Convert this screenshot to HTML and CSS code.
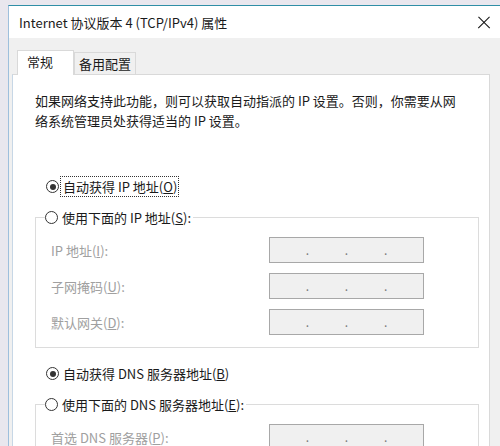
FILE: index.html
```html
<!DOCTYPE html>
<html lang="zh-CN">
<head>
    <meta charset="UTF-8">
    <meta name="viewport" content="width=device-width, initial-scale=1.0">
    <title>Internet 协议版本 4 (TCP/IPv4) 属性</title>
    <link rel="stylesheet" href="styles.css">
</head>
<body>
    <div class="window">
        <!-- Title Bar -->
        <div class="titlebar">
            <span class="title">Internet 协议版本 4 (TCP/IPv4) 属性</span>
            <span class="close" aria-label="关闭"></span>
        </div>

        <div class="client">
            <!-- Tabs -->
            <div class="tabs">
                <div class="tab active">常规</div>
                <div class="tab">备用配置</div>
            </div>

            <div class="panel">
                <p class="desc">如果网络支持此功能，则可以获取自动指派的 IP 设置。否则，你需要从网<br>络系统管理员处获得适当的 IP 设置。</p>

                <!-- IP address -->
                <div class="radio-row first">
                    <span class="radio checked"></span>
                    <span class="focus">自动获得 IP 地址(<u>O</u>)</span>
                </div>
                <fieldset class="group">
                    <legend><span class="radio"></span>使用下面的 IP 地址(<u>S</u>):</legend>
                    <div class="field">
                        <span class="label">IP 地址(<u>I</u>):</span>
                        <div class="ipbox"><span>.</span><span>.</span><span>.</span></div>
                    </div>
                    <div class="field">
                        <span class="label">子网掩码(<u>U</u>):</span>
                        <div class="ipbox"><span>.</span><span>.</span><span>.</span></div>
                    </div>
                    <div class="field">
                        <span class="label">默认网关(<u>D</u>):</span>
                        <div class="ipbox"><span>.</span><span>.</span><span>.</span></div>
                    </div>
                </fieldset>

                <!-- DNS -->
                <div class="radio-row dns">
                    <span class="radio checked"></span>
                    <span class="text">自动获得 DNS 服务器地址(<u>B</u>)</span>
                </div>
                <fieldset class="group last">
                    <legend><span class="radio"></span>使用下面的 DNS 服务器地址(<u>E</u>):</legend>
                    <div class="field">
                        <span class="label">首选 DNS 服务器(<u>P</u>):</span>
                        <div class="ipbox"><span>.</span><span>.</span><span>.</span></div>
                    </div>
                </fieldset>
            </div>
        </div>
    </div>
</body>
</html>
```

FILE: styles.css
```css
/* General Styling */
body {
    margin: 0;
    background-color: #e9e7ee;
    font-family: 'Noto Sans CJK SC', 'Noto Sans', sans-serif;
    font-size: 13px;
    color: #1a1a1a;
    overflow: hidden;
    height: 446px;
    padding-top: 5px;
    box-sizing: border-box;
}

.window {
    margin-left: 8px;
    border-top: 1px solid #2f8ea6;
    border-left: 1px solid #9ebfdc;
    background-color: #f0f0f0;
    height: 440px;
    overflow: hidden;
}

/* Title Bar */
.titlebar {
    height: 32px;
    background-color: #ffffff;
    display: flex;
    align-items: center;
    padding: 0 0 0 10px;
}

.title {
    line-height: 19px;
    flex: 1;
}

/* Close button: two crossed strokes */
.close {
    position: relative;
    width: 14px;
    height: 14px;
    margin: 1px 9px 0 0;
    flex-shrink: 0;
}

.close::before,
.close::after {
    content: "";
    position: absolute;
    left: -1px;
    top: 6px;
    width: 16px;
    height: 1.3px;
    background-color: #111111;
    transform: rotate(45deg);
}

.close::after {
    transform: rotate(-45deg);
}

/* Tabs */
.client {
    padding: 12px 0 0 3px;
}

.tabs {
    display: flex;
    align-items: flex-end;
    padding-left: 5px;
    height: 24px;
}

.tab {
    height: 21px;
    line-height: 21px;
    padding: 0 4px;
    border: 1px solid #d9d9d9;
    border-bottom: none;
    background-color: #f0f0f0;
}

.tab.active {
    height: 24px;
    line-height: 22px;
    width: 46px;
    padding: 0 0 0 9px;
    background-color: #ffffff;
    position: relative;
    z-index: 1;
    margin-bottom: -1px;
}

/* Panel */
.panel {
    width: 454px;
    height: 380px;
    background-color: #ffffff;
    border: 1px solid #d9d9d9;
    border-left-color: #c7d7e6;
    padding: 16px 0 0 22px;
}

.desc {
    margin: 0;
    line-height: 19.5px;
}

.radio-row {
    display: flex;
    align-items: center;
    height: 19px;
    line-height: 19px;
    padding-left: 11px;
}

.radio-row.first {
    margin-top: 47px;
}

.radio-row.dns {
    margin-top: 16px;
}

.radio {
    width: 11px;
    height: 11px;
    border: 1px solid #333333;
    border-radius: 50%;
    margin-right: 4px;
    display: inline-flex;
    align-items: center;
    justify-content: center;
    flex-shrink: 0;
    background-color: #ffffff;
}

.radio.checked::after {
    content: "";
    width: 6px;
    height: 6px;
    border-radius: 50%;
    background-color: #333333;
}

.focus {
    outline: 1px dotted #333333;
    outline-offset: 0;
    padding: 0 1px 0 2px;
    margin-left: -2px;
}

/* Group boxes */
.group {
    margin: 12px 0 0 0;
    width: 444px;
    border: 1px solid #dcdcdc;
    padding: 0 0 12px 15px;
    box-sizing: border-box;
}

.group legend {
    display: flex;
    align-items: center;
    height: 19px;
    line-height: 19px;
    padding: 0 2px 0 0;
    margin-left: -6px;
}

.field {
    display: flex;
    align-items: center;
    height: 26px;
    margin-top: 10px;
    color: #a0a0a0;
}

.label {
    width: 218px;
}

.ipbox {
    width: 153px;
    height: 24px;
    border: 1px solid #a8a8a8;
    background-color: #f0f0f0;
    display: flex;
    justify-content: space-evenly;
    color: #7a7a7a;
    font-size: 12px;
    line-height: 24px;
}
```
